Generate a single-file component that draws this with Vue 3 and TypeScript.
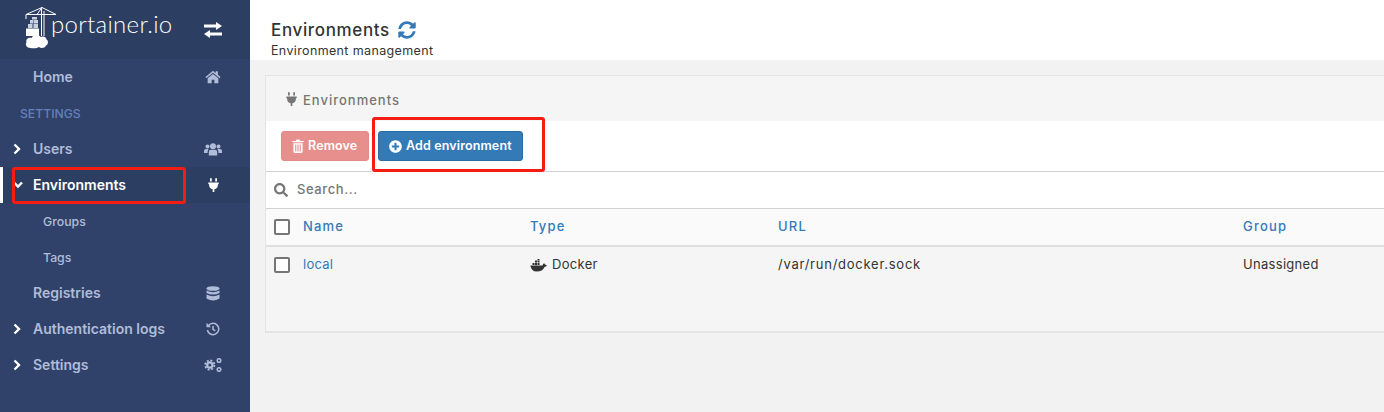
<script setup lang="ts">
interface NavItem { label: string; icon: string; chevron?: 'right' | 'down'; active?: boolean; sub?: boolean; heading?: boolean }
const nav: NavItem[] = [
  { label: 'Home', icon: 'home' },
  { label: 'SETTINGS', icon: '', heading: true },
  { label: 'Users', icon: 'users', chevron: 'right' },
  { label: 'Environments', icon: 'plug', chevron: 'down', active: true },
  { label: 'Groups', icon: '', sub: true },
  { label: 'Tags', icon: '', sub: true },
  { label: 'Registries', icon: 'database' },
  { label: 'Authentication logs', icon: 'history', chevron: 'right' },
  { label: 'Settings', icon: 'cogs', chevron: 'right' },
]
const plug = 'M320 32a32 32 0 0 0-64 0v96h64Zm48 128H16A16 16 0 0 0 0 176v32a16 16 0 0 0 16 16H32v32A160 160 0 0 0 160 412.800V512h64V412.800A160 160 0 0 0 352 256V224h16a16 16 0 0 0 16-16V176A16 16 0 0 0 368 160ZM128 32a32 32 0 0 0-64 0v96h64Z'
</script>

<template>
  <div class="page">
    <aside class="sidebar">
      <div class="brand">
        <svg class="logo" viewBox="0 0 36 46" width="36" height="46">
          <g fill="none" stroke="#fff" stroke-width="1">
            <path d="M1 8.500H31M1 8.500 17 1.500 31 8.500M12 8.500 17 1.500M1 8.500V13M16.500 1.500V30M19 5V30" />
          </g>
          <g fill="#c9d0de">
            <rect x="3" y="18" width="4.500" height="4" /><rect x="8.500" y="18" width="4.500" height="4" />
            <rect x="5" y="14" width="3.500" height="3.500" /><rect x="9" y="14" width="4" height="3.500" />
            <rect x="7" y="11" width="5" height="2.500" />
          </g>
          <path fill="#fff" d="M1 22.500H14V30H1Z" />
          <path fill="#fff" d="M5.500 42C1.500 42 0 38.500 1.500 36C0.500 33 4 31 6.500 32C8 28.500 14 28 15.500 31C18 29.500 21.500 31 21.500 33.500C23.500 34 23.500 39 21 39.500C19.500 42.500 16 42.500 14 41C12 42.500 8 42.500 5.500 42Z" />
        </svg>
        <span class="brand-name">portainer.io</span>
        <svg class="swap" viewBox="0 0 18 16" width="18" height="16">
          <path fill="#fff" d="M0 2.500H12V0L18 4 12 8V5.500H0Z" />
          <path fill="#fff" d="M18 10.500H6V8L0 12 6 16V13.500H18Z" />
        </svg>
      </div>
      <ul class="nav">
        <li v-for="item in nav" :key="item.label" class="row" :class="{ active: item.active, sub: item.sub, heading: item.heading }">
          <svg v-if="item.chevron === 'right'" class="chev right" viewBox="0 0 8 12" width="8" height="12"><path d="M1.500 1.500 6 6 1.500 10.500" /></svg>
          <svg v-if="item.chevron === 'down'" class="chev down" viewBox="0 0 10 8" width="10" height="8"><path d="M1 1.500 5 5.500 9 1.500" /></svg>
          <span class="label">{{ item.label }}</span>
          <span v-if="item.icon" class="ico">
            <svg v-if="item.icon === 'home'" viewBox="0 0 18 15" width="16" height="14"><path d="M9 0.500 0.500 7.500 1.500 8.800 9 2.800 16.500 8.800 17.500 7.500 14.500 5V1H12V3ZM3 9 9 4.200 15 9V14.500H10.500V10.500H7.500V14.500H3Z" /></svg>
            <svg v-else-if="item.icon === 'users'" viewBox="0 0 18 13" width="18" height="13"><circle cx="3.500" cy="3.500" r="2" /><circle cx="14.500" cy="3.500" r="2" /><circle cx="9" cy="3.200" r="3" /><path d="M0 10V8Q0 6 2 6H4.500Q3.500 7.500 3.500 10ZM18 10V8Q18 6 16 6H13.500Q14.500 7.500 14.500 10ZM4.800 12.500V9Q4.800 6.800 7 6.800H11Q13.200 6.800 13.200 9V12.500Z" /></svg>
            <svg v-else-if="item.icon === 'plug'" viewBox="0 0 384 512" width="11" height="14"><path :d="plug" /></svg>
            <svg v-else-if="item.icon === 'database'" viewBox="0 0 14 15" width="14" height="15"><ellipse cx="7" cy="2.500" rx="6.500" ry="2.300" /><path d="M0.500 4.500Q7 7.800 13.500 4.500V7Q7 10 0.500 7ZM0.500 8.500Q7 11.800 13.500 8.500V12.500Q7 16.500 0.500 12.500Z" /></svg>
            <svg v-else-if="item.icon === 'history'" viewBox="0 0 14 14" width="14" height="14" class="hist"><path d="M2.500 3.500A5.700 5.700 0 1 1 1.400 8" /><path d="M7 4V7.300L9.300 8.800" /><path class="fill" d="M0.500 0.800 5 5.200H0.500Z" /></svg>
            <svg v-else viewBox="0 0 18 14" width="18" height="14" class="cogs"><circle class="gear" cx="5.800" cy="7" r="4.600" /><circle class="hub" cx="5.800" cy="7" r="3.800" /><circle class="core" cx="5.800" cy="7" r="1.500" /><circle class="ring" cx="15" cy="2.500" r="1.800" /><circle class="ring" cx="15" cy="11.500" r="1.800" /></svg>
          </span>
        </li>
      </ul>
    </aside>

    <main class="main">
      <header class="top">
        <div class="title-line">
          <h1>Environments</h1>
          <svg viewBox="0 0 512 512" width="18" height="18" class="sync"><path d="M370.720 133.280C339.458 104.008 298.888 87.962 255.848 88c-77.458.068-144.328 53.178-162.791 126.850-1.344 5.363-6.122 9.150-11.651 9.150H24.103c-7.498 0-13.194-6.807-11.807-14.176C33.933 94.924 134.813 8 256 8c66.448 0 126.791 26.136 171.315 68.685L463.030 40.970C478.149 25.851 504 36.559 504 57.941V192c0 13.255-10.745 24-24 24H345.941c-21.382 0-32.090-25.851-16.971-40.971l41.750-41.749zM32 296h134.059c21.382 0 32.090 25.851 16.971 40.971l-41.750 41.750c31.262 29.273 71.835 45.319 114.876 45.280 77.418-.07 144.315-53.144 162.787-126.849 1.344-5.363 6.122-9.150 11.651-9.150h57.304c7.498 0 13.194 6.807 11.807 14.176C478.067 417.076 377.187 504 256 504c-66.448 0-126.791-26.136-171.315-68.685L48.970 471.030C33.851 486.149 8 475.441 8 454.059V320c0-13.255 10.745-24 24-24z" /></svg>
        </div>
        <p class="subtitle">Environment management</p>
      </header>

      <section class="panel">
        <div class="panel-head">
          <svg viewBox="0 0 384 512" width="11" height="14"><path :d="plug" /></svg>
          <span>Environments</span>
        </div>
        <div class="toolbar">
          <button class="btn danger" type="button">
            <svg viewBox="0 0 13 15" width="12" height="14"><path d="M0.500 2H4L5 0.500H8L9 2H12.500V3.500H0.500ZM1.500 4.500H11.500V13.500Q11.500 15 10 15H3Q1.500 15 1.500 13.500ZM3.500 6V13.500H4.700V6ZM5.900 6V13.500H7.100V6ZM8.300 6V13.500H9.500V6Z" fill-rule="evenodd" /></svg>
            <span class="btn-text">Remove</span>
          </button>
          <button class="btn primary" type="button">
            <svg viewBox="0 0 512 512" width="13" height="13"><path d="M256 8C119 8 8 119 8 256s111 248 248 248 248-111 248-248S393 8 256 8zm144 276c0 6.600-5.400 12-12 12h-92v92c0 6.600-5.400 12-12 12h-56c-6.600 0-12-5.400-12-12v-92h-92c-6.600 0-12-5.400-12-12v-56c0-6.600 5.400-12 12-12h92v-92c0-6.600 5.400-12 12-12h56c6.600 0 12 5.400 12 12v92h92c6.600 0 12 5.400 12 12v56z" /></svg>
            <span class="btn-text">Add environment</span>
          </button>
        </div>
        <div class="search">
          <svg viewBox="0 0 512 512" width="14" height="14"><path d="M505 442.700L405.300 343c-4.500-4.500-10.600-7-17-7H372c27.600-35.300 44-79.700 44-128C416 93.100 322.900 0 208 0S0 93.100 0 208s93.100 208 208 208c48.300 0 92.700-16.400 128-44v16.300c0 6.400 2.500 12.500 7 17l99.700 99.700c9.400 9.400 24.600 9.400 33.900 0l28.300-28.300c9.400-9.400 9.400-24.600.1-34zM208 336c-70.700 0-128-57.200-128-128 0-70.700 57.200-128 128-128 70.700 0 128 57.200 128 128 0 70.700-57.200 128-128 128z" /></svg>
          <span class="search-text">Search...</span>
        </div>
        <div class="grid head">
          <span class="check-cell"><i class="check"></i></span>
          <span class="cell">Name</span><span class="cell">Type</span><span class="cell">URL</span><span class="cell">Group</span>
        </div>
        <div class="grid body">
          <span class="check-cell"><i class="check"></i></span>
          <span class="cell link">local</span>
          <span class="type">
            <svg viewBox="0 0 17 13" width="17" height="13"><path d="M0.300 6.500H12.500Q13 4.500 14 4.300Q15 5 15.200 5.800Q16.200 5.500 17 6.200Q16 8 14.500 8Q12.800 12.500 6.500 12.500Q1.500 12.500 0.300 6.500Z" /><rect x="2.500" y="4" width="2" height="2" /><rect x="5" y="4" width="2" height="2" /><rect x="7.500" y="4" width="2" height="2" /><rect x="5" y="1.500" width="2" height="2" /><rect x="7.500" y="1.500" width="2" height="2" /><rect x="7.500" y="0" width="2" height="1.200" /></svg>
            <span class="cell">Docker</span>
          </span>
          <span class="cell url">/var/run/docker.sock</span>
          <span class="cell">Unassigned</span>
        </div>
      </section>
    </main>

    <div class="mark mark-nav"></div>
    <div class="mark mark-add"></div>
  </div>
</template>

<style>
html, body { margin: 0; background: #f2f2f2; overflow: hidden; }
</style>

<style scoped>
.page {
  position: relative;
  display: flex;
  width: 1384px;
  height: 412px;
  overflow: hidden;
  font-family: Inter, "Noto Sans", sans-serif;
  font-size: 13px;
  color: #333;
}
.sidebar { flex: 0 0 250px; background: #30426a; }
.brand {
  height: 59px;
  background: #2d3e63;
  display: flex;
  align-items: flex-start;
  position: relative;
}
.logo { margin: 6px 0 0 25px; flex: none; }
.brand-name {
  margin: 10px 0 0 -10px;
  color: #fff;
  font-family: Lato, sans-serif;
  font-size: 24px;
  line-height: 28px;
  font-weight: 300;
  letter-spacing: 0.3px;
}
.swap { position: absolute; left: 204px; top: 22px; }
.nav { list-style: none; margin: 0; padding: 0; }
.row {
  height: 36px;
  display: flex;
  align-items: center;
  position: relative;
  color: #b1bcd8;
  font-weight: 600;
  font-size: 14px;
  padding: 0 0 2px 33px;
  box-sizing: border-box;
}
.row .ico {
  position: absolute;
  left: 204px;
  top: 10px;
  width: 18px;
  height: 16px;
  display: flex;
  align-items: center;
  justify-content: center;
  fill: #b1bcd8;
}
.row.heading { color: #6480bb; font-size: 12.2px; font-weight: 500; padding: 0 0 0 20px; }
.row.sub { font-weight: 500; font-size: 12.3px; padding: 0 0 0 43px; }
.row.active { background: #2d3e63; color: #fff; border-left: 3px solid #fff; padding-left: 30px; }
.row.active .ico { left: 201px; fill: #fff; }
.row.active .chev { left: 10px; }
.chev {
  position: absolute;
  left: 13px;
  fill: none;
  stroke: #fff;
  stroke-width: 2.400;
}
.chev.right { top: 12px; }
.chev.down { top: 14px; }
.hist { fill: none; stroke: #b1bcd8; stroke-width: 1.500; }
.hist .fill { fill: #b1bcd8; stroke: none; }
.cogs .gear { fill: none; stroke: #b1bcd8; stroke-width: 1.800; stroke-dasharray: 2 1.610; }
.cogs .hub { fill: #b1bcd8; }
.cogs .core { fill: #30426a; }
.cogs .ring { fill: none; stroke: #b1bcd8; stroke-width: 1.500; }

.main { flex: 1; min-width: 0; }
.top { height: 60px; background: #fff; box-sizing: border-box; padding: 20px 0 0 21px; }
.title-line { display: flex; align-items: center; gap: 8px; height: 20px; }
h1 { margin: 0; font-size: 17px; line-height: 20px; font-weight: 500; color: #333; letter-spacing: 0.65px; }
.sync { fill: #337ab7; }
.subtitle { margin: 3px 0 0; font-size: 12.5px; line-height: 15px; color: #333; letter-spacing: 0.36px; }

.panel {
  margin: 15px 0 0 15px;
  width: 1140px;
  height: 258px;
  box-sizing: border-box;
  border: 1px solid #e4e4e4;
  border-bottom-width: 2px;
  background: #f5f5f5;
}
.panel-head {
  height: 45px;
  display: flex;
  align-items: center;
  gap: 6px;
  padding-left: 20px;
  color: #767676;
  fill: #767676;
  font-weight: 500;
  letter-spacing: 1px;
}
.panel-head span { position: relative; padding-top: 2px; }
.toolbar {
  height: 50px;
  background: #fff;
  border-bottom: 1px solid #d2d1d1;
  display: flex;
  align-items: center;
  gap: 9px;
  padding-left: 15px;
}
.btn {
  height: 30px;
  border-radius: 3px;
  border: 1px solid transparent;
  color: #fff;
  fill: #fff;
  font: 600 12.500px Inter, sans-serif;
  display: flex;
  align-items: center;
  gap: 4px;
  padding: 0 10px;
  box-sizing: border-box;
}
.btn-text { padding-bottom: 2px; letter-spacing: 0.13px; }
.danger { width: 88px; background: #e68f8c; border-color: #e08b88; }
.primary { width: 145px; background: #337ab7; border-color: #2e6da4; }
.search {
  height: 36px;
  background: #fff;
  border-bottom: 1px solid #d2d1d1;
  display: flex;
  align-items: center;
  gap: 9px;
  padding-left: 8px;
  color: #767676;
  fill: #767676;
  font-weight: 500;
}
.search-text { padding-bottom: 2px; letter-spacing: 0.6px; }
.grid {
  display: grid;
  grid-template-columns: 37px 227px 248px 465px 1fr;
  align-items: center;
}
.cell { padding-bottom: 2px; letter-spacing: 0.3px; }
.head {
  height: 36px;
  background: #fafafa;
  border-bottom: 2px solid #dedede;
  color: #337ab7;
  font-weight: 500;
}
.head .cell { letter-spacing: 1.2px; }
.body { height: 36px; }
.url { letter-spacing: 0.75px; }
.check-cell { display: flex; padding-left: 8px; }
.check {
  width: 16px;
  height: 16px;
  box-sizing: border-box;
  border: 2px solid #767676;
  border-radius: 2px;
  background: #fff;
}
.link { color: #337ab7; letter-spacing: 0.25px; }
.type { display: flex; align-items: center; gap: 5px; fill: #333; }
.mark {
  position: absolute;
  box-sizing: border-box;
  border: 3px solid #f51c13;
  border-radius: 3px;
}
.mark-nav { left: 12px; top: 167px; width: 174px; height: 37px; }
.mark-add { left: 372px; top: 117px; width: 173px; height: 55px; }
</style>
